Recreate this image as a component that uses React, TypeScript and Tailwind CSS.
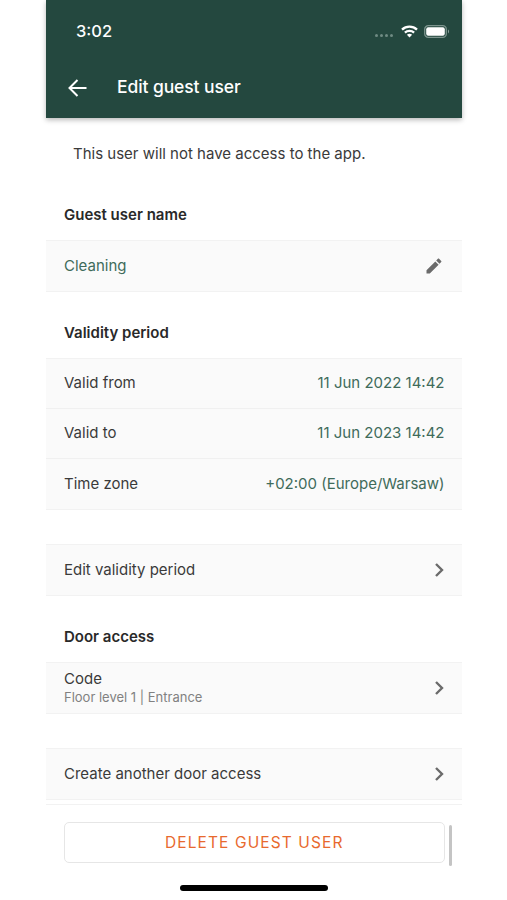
import type { ReactNode } from 'react'

function Chevron() {
  return (
    <svg className="mr-[-1px] shrink-0" width="14" height="18" viewBox="0 0 14 18" fill="none">
      <path d="M4 3l6 6-6 6" stroke="#6b6b6b" strokeWidth="2.4" />
    </svg>
  )
}

function StatusBar() {
  return (
    <div className="flex h-[62px] items-center justify-between pl-[30px] pr-[12px] text-white">
      <span className="text-[16.5px] font-medium leading-5">3:02</span>
      <div className="flex items-center">
        <div className="mr-[8px] mt-[8px] flex gap-[2px]">
          {[0, 1, 2, 3].map(i => (
            <span key={i} className="h-[3px] w-[3px] rounded-full bg-[#6f8b83]" />
          ))}
        </div>
        <svg width="17" height="13" viewBox="0 0 17 13" fill="none" stroke="#fff" strokeWidth="2.3">
          <path d="M1 4.6C5.2.6 11.8.6 16 4.6" />
          <path d="M3.9 7.6c2.6-2.4 6.6-2.4 9.2 0" />
          <path d="M8.5 12.4L5.9 9.8c1.5-1.3 3.7-1.3 5.2 0z" fill="#fff" stroke="none" />
        </svg>
        <svg className="ml-[6px]" width="26" height="13" viewBox="0 0 26 13">
          <rect x=".7" y=".7" width="21.6" height="11.6" rx="3.6" fill="none" stroke="#7c948d" strokeWidth="1.3" />
          <rect x="2.2" y="2.2" width="18.6" height="8.6" rx="2" fill="#fff" />
          <path d="M24 4.6v3.8c1.4-.6 1.4-3.2 0-3.8z" fill="#8ba19b" />
        </svg>
      </div>
    </div>
  )
}

function Header() {
  return (
    <header className="h-[118px] bg-[#24483f] shadow-[0_2px_5px_rgba(0,0,0,0.28)]">
      <StatusBar />
      <div className="flex h-[51px] items-center pl-[21px] text-white">
        <svg width="21" height="20" viewBox="0 0 21 20" fill="none" stroke="#fff" strokeWidth="2">
          <path d="M19.5 10H3M10.5 2L2.5 10l8 8" />
        </svg>
        <h1 className="ml-[29px] text-[17.5px] font-medium tracking-[-0.1px]">Edit guest user</h1>
      </div>
    </header>
  )
}

function Heading({ children }: { children: ReactNode }) {
  return <h2 className="flex h-[50px] items-center px-[18px] text-[15px] font-semibold text-[#292929]">{children}</h2>
}

function Card({ children }: { children: ReactNode }) {
  return <div className="divide-y divide-[#f0f0f0] border-y border-[#f2f2f2] bg-[#fafafa]">{children}</div>
}

function Row({ label, children }: { label: ReactNode; children: ReactNode }) {
  return (
    <div className="flex h-[50px] items-center justify-between pl-[18px] pr-[17px] text-[15px]">
      <div>{label}</div>
      {children}
    </div>
  )
}

function Value({ children }: { children: ReactNode }) {
  return <span className="text-[#3f6b5a]">{children}</span>
}

export default function App() {
  return (
    <div className="h-[900px] w-full overflow-hidden bg-white pl-[46px] font-['Inter',sans-serif] text-[#3a3a3a]">
      <div className="relative flex h-full w-[415.5px] flex-col">
        <Header />
        <p className="flex h-[72px] shrink-0 items-center pl-[27px] text-[15px]">
          This user will not have access to the app.
        </p>
        <Heading>Guest user name</Heading>
        <Card>
          <Row label={<Value>Cleaning</Value>}>
            <svg className="mr-[2px]" width="18" height="18" viewBox="0 0 18 18" fill="#6b6b6b">
              <path d="M1.5 13.2v3.3h3.3L13.6 7.7l-3.3-3.3zM16.2 5.1c.4-.4.4-.9 0-1.2l-2.1-2.1c-.4-.4-.9-.4-1.2 0l-1.7 1.7 3.3 3.3z" />
            </svg>
          </Row>
        </Card>
        <div className="mt-4">
          <Heading>Validity period</Heading>
        </div>
        <Card>
          <Row label="Valid from"><Value>11 Jun 2022 14:42</Value></Row>
          <Row label="Valid to"><Value>11 Jun 2023 14:42</Value></Row>
          <Row label="Time zone"><Value>+02:00 (Europe/Warsaw)</Value></Row>
        </Card>
        <div className="mt-[34px]">
          <Card>
            <Row label="Edit validity period"><Chevron /></Row>
          </Card>
        </div>
        <div className="mt-4">
          <Heading>Door access</Heading>
        </div>
        <Card>
          <Row
            label={
              <>
                <div className="leading-[18px]">Code</div>
                <div className="text-[13px] leading-[18px] text-[#818181]">Floor level 1 | Entrance</div>
              </>
            }
          >
            <Chevron />
          </Row>
        </Card>
        <div className="mt-[34px]">
          <Card>
            <Row label="Create another door access"><Chevron /></Row>
          </Card>
        </div>
        <footer className="mt-[4px] border-t border-[#f2f2f2] pl-[18px] pr-[17px] pt-[17px]">
          <button className="h-[41px] w-full rounded-[5px] border border-[#e6e6e6] text-[15.5px] tracking-[1.1px] text-[#e8692e]">
            DELETE GUEST USER
          </button>
        </footer>
        <div className="absolute left-[403px] top-[825px] h-[41px] w-[2.5px] rounded-full bg-[#c4c4c4]" />
        <div className="absolute left-[134px] top-[885px] h-[6px] w-[148px] rounded-full bg-black" />
      </div>
    </div>
  )
}
